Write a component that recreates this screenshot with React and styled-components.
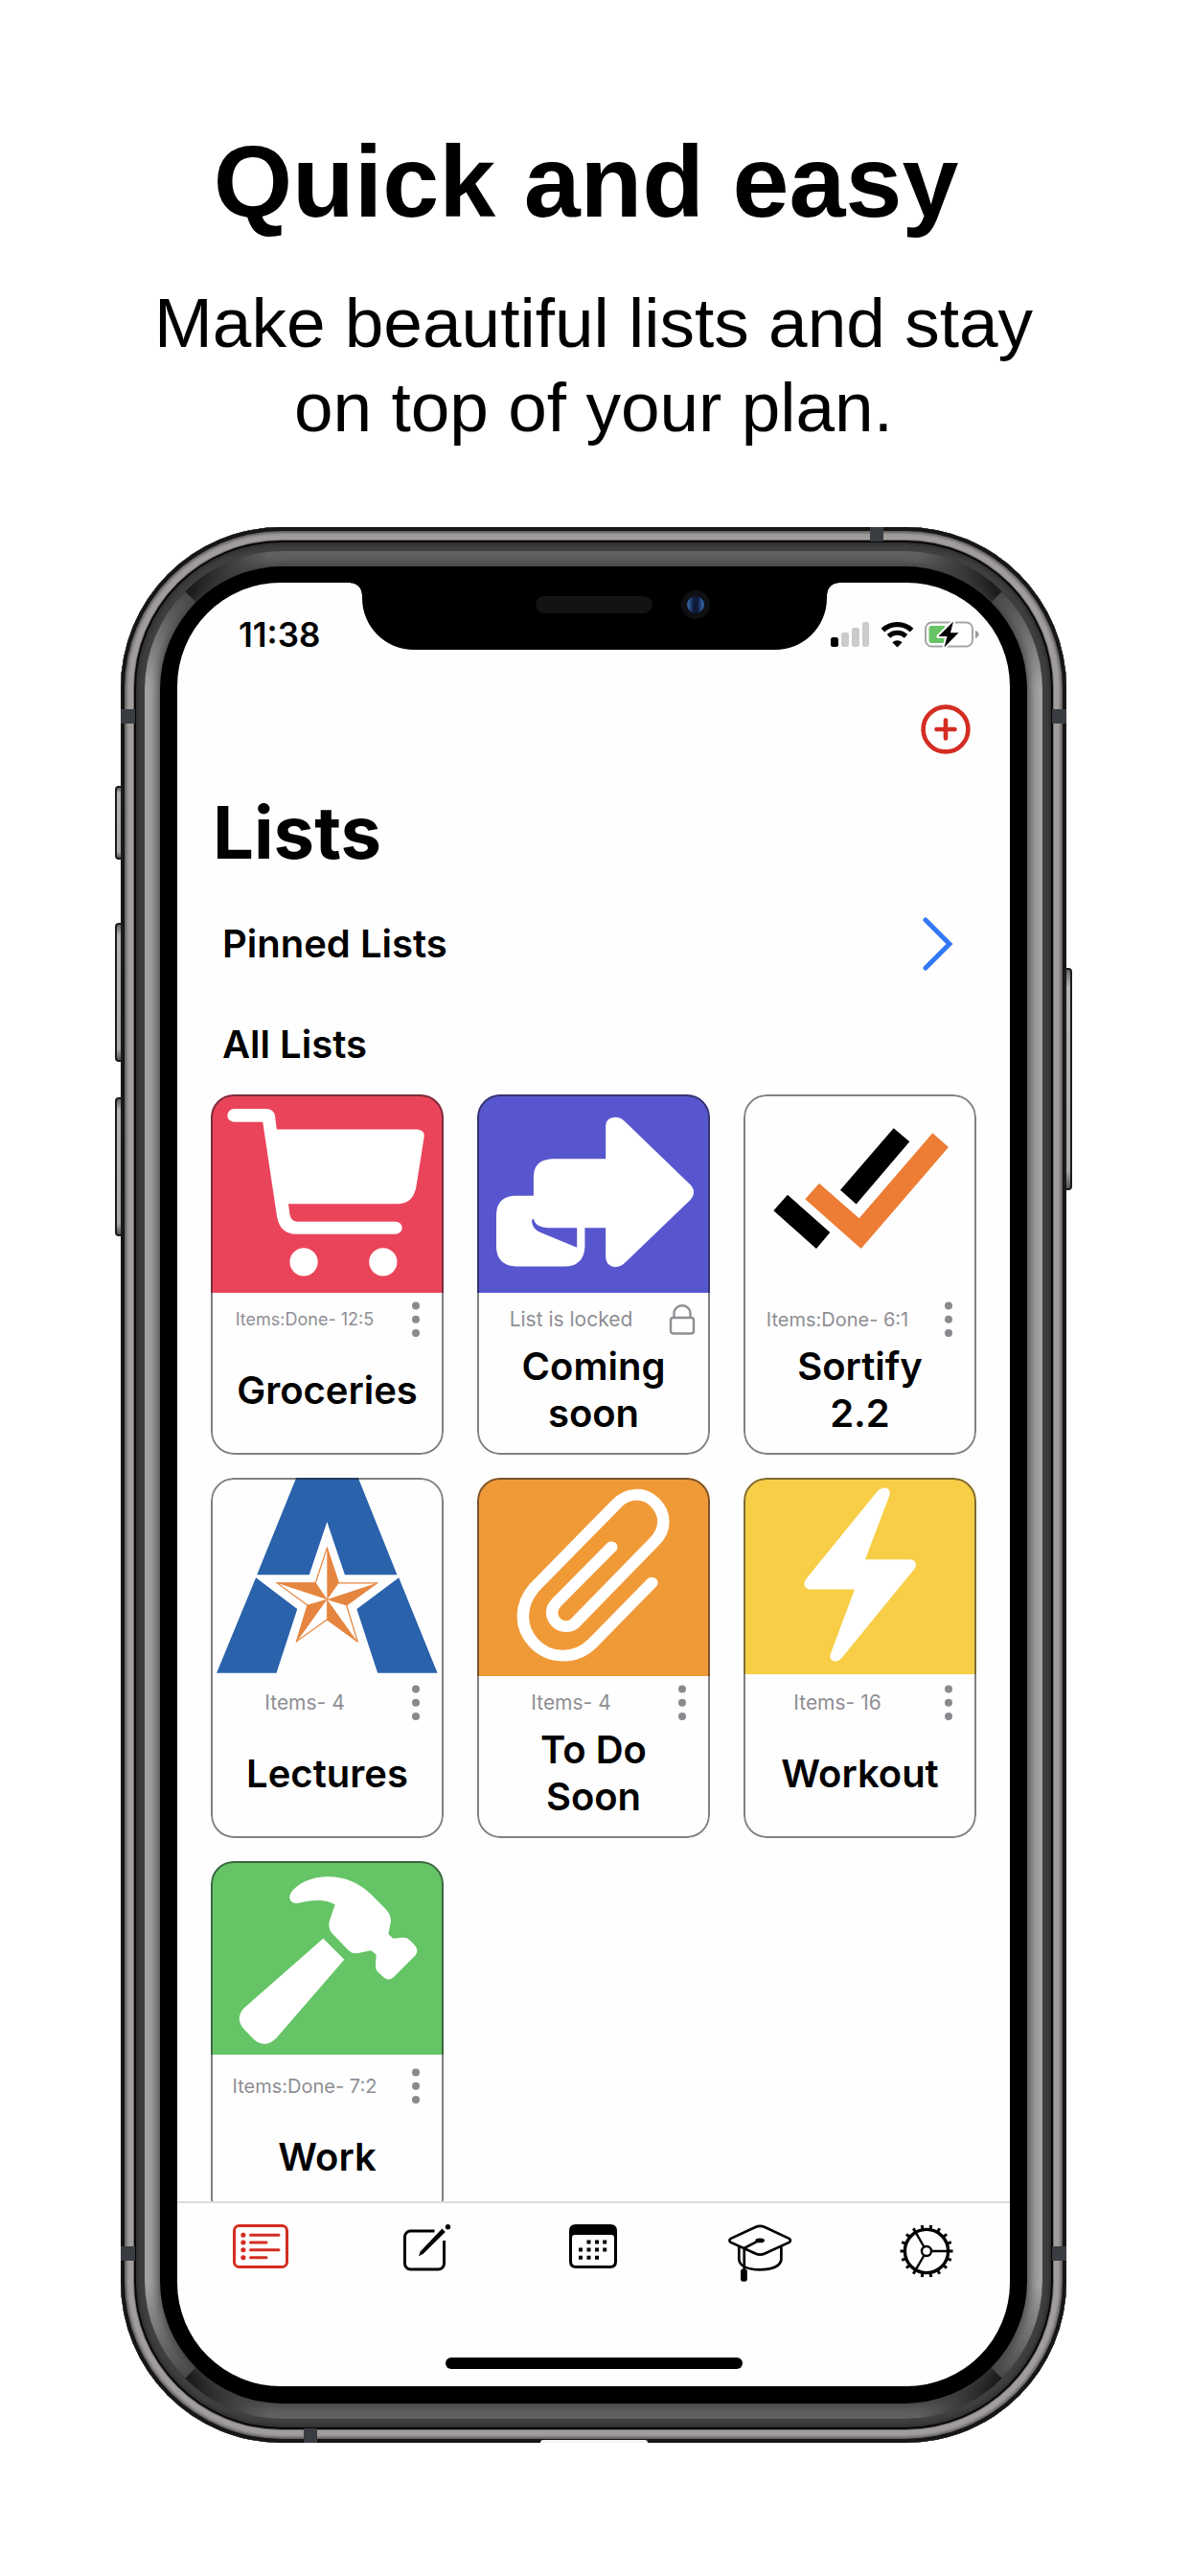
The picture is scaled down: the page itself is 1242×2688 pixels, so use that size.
import React from 'react';
import styled, { createGlobalStyle } from 'styled-components';

const GlobalStyle = createGlobalStyle`
  * { box-sizing: border-box; }
  body { margin: 0; background: #fff; color: #000; }
  h1, h2, h3, p, ul { margin: 0; padding: 0; }
  ul { list-style: none; }
  button { border: 0; background: none; padding: 0; margin: 0; color: inherit; font: inherit; cursor: pointer; }
  svg { display: block; }
`;

const Page = styled.main`
  display: flex;
  flex-direction: column;
  gap: 81px;
  padding: 125px 129px 139px 126px;
  background: #fff;
`;

const Hero = styled.header`
  display: flex;
  flex-direction: column;
  gap: 40px;
  text-align: center;
  font-family: 'Liberation Sans', Arial, sans-serif;
`;

const Headline = styled.h1`
  padding-right: 16px;
  font-size: 106px;
  line-height: 128px;
  font-weight: 700;
`;

const Tagline = styled.p`
  font-size: 73px;
  line-height: 88px;
`;

/* ---------- device ---------- */

const Phone = styled.div`
  position: relative;
  display: grid;
  grid-template-rows: minmax(0, 1fr);
  aspect-ratio: 987 / 1999;
  min-height: 0;
  padding: 25px;
  border-radius: 168px;
  background: #3f3f3f;
  box-shadow:
    inset 0 0 0 4px #161616,
    inset 0 0 3px 6px #5c5959,
    inset 0 0 0 13px #a19d9d,
    inset 0 0 0 14px #706d6d,
    inset 0 0 0 16px #060606,
    inset 0 0 4px 18px #2c2c2c;
`;

const Bezel = styled.div`
  position: relative;
  display: grid;
  grid-template-rows: minmax(0, 1fr);
  padding: 16px;
  border-radius: 144px;
  overflow: hidden;
  background: linear-gradient(90deg, #1c1c1c 50px, #626262 130px, #626262 calc(100% - 130px), #1c1c1c calc(100% - 50px));

  &::before {
    content: '';
    position: absolute;
    inset: 0;
    clip-path: polygon(0 0, 60px 60px, calc(100% - 60px) 60px, 100% 0, 100% 100%, calc(100% - 60px) calc(100% - 60px), 60px calc(100% - 60px), 0 100%);
    background: linear-gradient(180deg, #333 20px, #a4a4a4 140px, #a4a4a4 calc(100% - 140px), #333 calc(100% - 20px));
  }
`;

const Glass = styled.div`
  position: relative;
  display: grid;
  grid-template-rows: minmax(0, 1fr);
  padding: 17px 18px 18px;
  border-radius: 128px;
  background: #000;
  box-shadow: 0 0 12px 2px #3a3a3a;
`;

const Screen = styled.div`
  position: relative;
  display: flex;
  flex-direction: column;
  border-radius: 108px;
  overflow: hidden;
  background: #fefefe;
  font-family: Inter, 'Liberation Sans', sans-serif;
`;

const SideKey = styled.span`
  position: absolute;
  top: ${(p) => p.$top};
  ${(p) => p.$side}: -6px;
  width: 8px;
  height: ${(p) => p.$height};
  border: 2px solid #1c1c1c;
  border-radius: ${(p) => (p.$side === 'left' ? '4px 0 0 4px' : '0 4px 4px 0')};
  background: linear-gradient(180deg, #666, #b4b2b2 8%, #a8a6a6 92%, #555);
`;

const SideBand = styled.span`
  position: absolute;
  ${(p) => p.$side}: 0;
  ${(p) => p.$edge}: 190px;
  width: 15px;
  height: 15px;
  background: #393c41;
`;

const EndBand = styled.span`
  position: absolute;
  ${(p) => p.$side}: 191px;
  ${(p) => p.$edge}: 0;
  width: 14px;
  height: 15px;
  background: #393c41;
`;

const Port = styled.span`
  position: absolute;
  bottom: 0;
  left: 50%;
  width: 112px;
  margin-left: -56px;
  height: 3px;
  border-radius: 3px 3px 0 0;
  background: #f4f4f4;
`;

const Notch = styled.div`
  position: absolute;
  z-index: 1;
  top: 0;
  left: 50%;
  width: 485px;
  height: 70px;
  margin-left: -242px;
  border-radius: 0 0 54px 54px;
  background: #000;

  &::before, &::after {
    content: '';
    position: absolute;
    top: 0;
    width: 12px;
    height: 12px;
  }
  &::before { right: 100%; background: radial-gradient(circle at 0 100%, transparent 11px, #000 12px); }
  &::after { left: 100%; background: radial-gradient(circle at 100% 100%, transparent 11px, #000 12px); }
`;

const Speaker = styled.span`
  position: absolute;
  top: 14px;
  left: 181px;
  width: 122px;
  height: 18px;
  border-radius: 9px;
  background: #131313;
`;

const Camera = styled.span`
  position: absolute;
  top: 8px;
  left: 333px;
  width: 30px;
  height: 30px;
  border-radius: 50%;
  border: 6px solid #0e1013;
  background: linear-gradient(90deg, #2f5f9c 10%, #101a3a 38%, #101a3a 62%, #2f5f9c 90%);
`;

/* ---------- app ---------- */

const StatusBar = styled.div`
  flex: none;
  display: flex;
  justify-content: space-between;
  align-items: center;
  height: 108px;
  padding: 0 32px 0 64px;
`;

const Clock = styled.time`
  font-size: 35px;
  line-height: 40px;
  font-weight: 600;
`;

const StatusIcons = styled.div`
  display: flex;
  align-items: center;
  gap: 11px;
`;

const Toolbar = styled.div`
  flex: none;
  display: flex;
  justify-content: flex-end;
  align-items: center;
  height: 90px;
  padding-right: 41px;
`;

const Viewport = styled.div`
  flex: 1;
  min-height: 0;
  overflow: hidden;
`;

const Title = styled.h2`
  padding: 16px 37px 10px;
  font-size: 76px;
  line-height: 92px;
  font-weight: 700;
`;

const SectionRow = styled.div`
  display: flex;
  justify-content: space-between;
  align-items: center;
  height: ${(p) => p.$height};
  padding: 0 59px 0 47px;
`;

const SectionTitle = styled.h3`
  font-size: 40px;
  line-height: 48px;
  font-weight: 600;
`;

const Grid = styled.ul`
  display: grid;
  grid-template-columns: repeat(3, minmax(0, 1fr));
  gap: 24px 35px;
  padding: 8px 35px;
`;

const Card = styled.li`
  position: relative;
  height: 376px;
  border-radius: 24px;
  overflow: hidden;
  background: #fefefe;

  &::after {
    content: '';
    position: absolute;
    inset: 0;
    border: 2px solid rgba(28, 28, 38, 0.56);
    border-radius: 24px;
    pointer-events: none;
  }
`;

const CoverSlot = styled.div`
  height: 207px;
`;

const Cover = styled.div`
  height: ${(p) => p.$height};
  background: ${(p) => p.$color};

  & > svg { width: 100%; height: 100%; }
`;

const Meta = styled.div`
  display: grid;
  grid-template-columns: minmax(0, 1fr) 36px;
  align-items: center;
  height: 55px;
  padding-right: 11px;
  color: #8e8e93;
`;

const Count = styled.p`
  text-align: center;
  font-size: ${(p) => p.$size};
  line-height: 24px;
  white-space: nowrap;
`;

const CardButton = styled.button`
  display: grid;
  place-items: center;
`;

const CardTitle = styled.h3`
  display: flex;
  align-items: center;
  justify-content: center;
  height: 92px;
  padding: 0 26px;
  text-align: center;
  font-size: 40px;
  line-height: 49px;
  font-weight: 600;
`;

const TabBar = styled.nav`
  flex: none;
  display: grid;
  grid-template-columns: repeat(5, minmax(0, 1fr));
  height: 163px;
  border-top: 2px solid #dcdcdc;
`;

const Tab = styled.button`
  display: grid;
  place-items: start center;
  height: 100px;
  padding-top: 22px;
  color: ${(p) => (p.$active ? '#d42d22' : '#000')};
`;

const HomeIndicator = styled.div`
  flex: none;
  width: 310px;
  height: 12px;
  margin: 0 auto 18px;
  border-radius: 6px;
  background: #000;
`;

/* ---------- drawings ---------- */

const Signal = () => (
  <svg width="41" height="27" viewBox="0 0 41 27" aria-hidden="true">
    <rect x="0" y="16" width="8" height="10" rx="2.5" fill="#000" />
    <rect x="11" y="11" width="8" height="15" rx="2.5" fill="#cbcbcb" />
    <rect x="22" y="6" width="8" height="20" rx="2.5" fill="#cbcbcb" />
    <rect x="33" y="0" width="7" height="26" rx="2.5" fill="#cbcbcb" />
  </svg>
);

const Wifi = () => (
  <svg width="35" height="27" viewBox="0 0 35 27" aria-hidden="true">
    <path d="M2.4 8.6A22 22 0 0 1 32.6 8.6" fill="none" stroke="#000" strokeWidth="5.2" />
    <path d="M8.4 14.8A13.4 13.4 0 0 1 26.6 14.8" fill="none" stroke="#000" strokeWidth="5" />
    <path d="M17.5 26.5 12.3 21.2A7.6 7.6 0 0 1 22.7 21.2Z" fill="#000" />
  </svg>
);

const Battery = () => (
  <svg width="57" height="28" viewBox="0 0 57 28" aria-hidden="true">
    <rect x="1" y="1.5" width="49" height="25" rx="6.5" fill="#fff" stroke="#a6a6a6" strokeWidth="2" />
    <path d="M53 10q3.500 1.500 3.500 4t-3.500 4z" fill="#999" />
    <rect x="4.5" y="5" width="18" height="18" rx="3" fill="#66c466" />
    <path d="M30 0.500 14.500 16h9L20.500 27.500 35.500 12.300h-8.500Z" fill="#000" stroke="#fff" strokeWidth="4" paintOrder="stroke" strokeLinejoin="round" />
  </svg>
);

const PlusCircle = () => (
  <svg width="52" height="52" viewBox="0 0 52 52" fill="none" stroke="#d42d22" strokeWidth="4.6" strokeLinecap="round" aria-hidden="true">
    <circle cx="26" cy="26" r="23.4" />
    <path d="M26 16.500v19M16.500 26h19" />
  </svg>
);

const Chevron = () => (
  <svg width="32" height="56" viewBox="0 0 32 56" fill="none" stroke="#3478f6" strokeWidth="5" strokeLinecap="round" strokeLinejoin="miter" aria-hidden="true">
    <path d="M3 3 28 28 3 53" />
  </svg>
);

const Dots = () => (
  <svg width="10" height="38" viewBox="0 0 10 38" fill="#8a8a8e" aria-hidden="true">
    <circle cx="5" cy="4.5" r="4" />
    <circle cx="5" cy="18.8" r="4" />
    <circle cx="5" cy="33" r="4" />
  </svg>
);

const Lock = () => (
  <svg width="28" height="32" viewBox="0 0 28 32" fill="none" stroke="#8e8e93" strokeWidth="2.4" aria-hidden="true">
    <rect x="2" y="14" width="24" height="16.5" rx="2.5" />
    <path d="M5.500 14V9.500a8.500 8.200 0 0 1 17 0V14" />
  </svg>
);

const Cart = () => (
  <svg viewBox="55 63 681 618" preserveAspectRatio="none" fill="#fff" aria-hidden="true">
    <path d="M124 108H216Q240 108 243 132L248 172H660Q680 174 679 194L657 344Q649 404 604 404H282L286 436Q290 459 308 459H595A19.500 19.500 0 0 1 595 498H304Q256 498 248 440L207 149H124A20.500 20.500 0 0 1 124 108Z" />
    <ellipse cx="327" cy="585" rx="41" ry="43.5" />
    <ellipse cx="559" cy="585" rx="41" ry="43.5" />
  </svg>
);

const Share = () => (
  <svg viewBox="834 63 681 618" preserveAspectRatio="none" aria-hidden="true">
    <path fill="#fff" fillRule="evenodd" d="M1210 264V160Q1212 135 1238 134Q1253 134 1266 147L1457 344Q1478 367 1457 392L1266 588Q1253 601 1238 601Q1212 599 1210 572V479H1149V540Q1145 598 1090 599H948Q892 596 890 540V436Q892 380 948 379H999V318Q1001 266 1054 264ZM1126 479H1049Q1005 479 999 450Q990 452 997 472Q1004 487 1021 494L1126 540Z" />
  </svg>
);

const Checks = () => (
  <svg viewBox="108 63 729 618" preserveAspectRatio="none" aria-hidden="true">
    <path fill="#000" d="M246 376 379 493 336 544 202 425ZM578 168 628 210 461 405 411 361Z" />
    <path fill="#ed7d35" d="M345 340 470 449 700 183 750 227 476 544 301 389Z" />
  </svg>
);

const Letter = () => (
  <svg viewBox="55 63 681 618" preserveAspectRatio="none" aria-hidden="true">
    <path fill="#2a62ab" d="M305 63H486L600 365H447L395 200 343 365H190ZM187 374 308 472 247 671H72ZM605 374 482 472 543 671H718Z" />
    <path fill="#fff" stroke="#e5853f" strokeWidth="3.5" d="M395 282 429 391H541L452 460 484 573 395 505 306 573 338 460 249 391H361Z" />
    <path fill="#e5853f" d="M395 278 429 390 395 442ZM544 390 452 460 395 442ZM486 577 395 505V442ZM304 577 338 460 395 442ZM246 390H361L395 442Z" />
    <path fill="none" stroke="#e5853f" strokeWidth="2" d="M395 442 361 390M395 442 429 390M395 442 452 460M395 442V505M395 442 338 460" />
  </svg>
);

const Clip = () => (
  <svg viewBox="834 63 681 618" preserveAspectRatio="none" fill="none" stroke="#fff" strokeWidth="35" strokeLinecap="round" aria-hidden="true">
    <path d="M1345 390 1170 580C1118 634 1042 626 1000 578C956 528 958 458 1002 404L1240 146C1272 108 1322 106 1354 140C1388 176 1386 226 1354 260L1128 507C1110 532 1080 532 1064 512C1048 494 1050 468 1066 452L1227 279" />
  </svg>
);

const Bolt = () => (
  <svg viewBox="108 63 729 613" preserveAspectRatio="none" fill="#fff" aria-hidden="true">
    <path d="M530 102Q546 90 559 97Q569 104 565 118L489 318H630Q648 320 648 336Q647 343 641 350L415 626Q404 638 391 636Q376 631 380 614L456 411H316Q298 409 298 393Q299 385 306 376Z" />
  </svg>
);

const Hammer = () => (
  <svg viewBox="60 60 729 605" preserveAspectRatio="none" fill="#fff" aria-hidden="true">
    <path d="M412 302 478 368 265 613Q232 646 197 619L159 580Q138 551 162 521Z" />
    <path d="M332 192Q314 194 308 180Q304 164 318 150Q356 112 420 109Q500 106 562 164L606 208Q624 226 624 248L616 288 631 302 664 299Q675 299 684 308L701 326Q711 340 701 354L632 423Q617 437 602 424L582 405Q575 398 576 388L578 353 562 339 518 348Q503 350 492 340L438 284Q426 268 432 246L449 196Q408 172 332 192Z" />
  </svg>
);

const ListIcon = () => (
  <svg width="58" height="46" viewBox="0 0 58 46" fill="none" stroke="currentColor" strokeWidth="3" strokeLinecap="round" aria-hidden="true">
    <rect x="1.5" y="1.5" width="55" height="43" rx="5" />
    <path d="M18.500 11.200H48M18.500 19H35M18.500 26.800H48M18.500 34.800H35" />
    <path d="M10.800 11.200h.2M10.800 19h.2M10.800 26.800h.2M10.800 34.800h.2" strokeWidth="5" />
  </svg>
);

const ComposeIcon = () => (
  <svg width="50" height="52" viewBox="0 0 50 52" fill="none" stroke="currentColor" strokeWidth="3" aria-hidden="true">
    <path d="M32.500 7H7.500a6 6 0 0 0-6 6V41a6 6 0 0 0 6 6H36.500a6 6 0 0 0 6-6V17" />
    <path fill="currentColor" stroke="none" d="M40.400 4.500 43.800 8 20.500 31 16 33.200 17.600 28.500Z" />
    <circle cx="46.5" cy="2.8" r="2.7" fill="currentColor" stroke="none" />
  </svg>
);

const CalendarIcon = () => (
  <svg width="50" height="46" viewBox="0 0 50 46" fill="currentColor" aria-hidden="true">
    <path fillRule="evenodd" d="M7 0H43Q50 0 50 7V39Q50 46 43 46H7Q0 46 0 39V7Q0 0 7 0ZM6 11Q3 11 3 14V39Q3 43 7 43H43Q47 43 47 39V14Q47 11 44 11Z" />
    <path d="M18.500 16.500h4v4h-4zM27 16.500h4v4h-4zM35.200 16.500h4v4h-4zM10 24.600h4v4h-4zM18.500 24.600h4v4h-4zM27 24.600h4v4h-4zM35.200 24.600h4v4h-4zM10 32.800h4v4h-4zM18.500 32.800h4v4h-4zM27 32.800h4v4h-4z" />
  </svg>
);

const CapIcon = () => (
  <svg width="68" height="60" viewBox="459 120 199 181" preserveAspectRatio="none" fill="none" stroke="currentColor" strokeWidth="8" strokeLinejoin="round" aria-hidden="true">
    <path d="M545 129Q559 122 574 129L648 165Q656 171 648 177L574 212Q559 219 545 212L470 177Q462 171 470 165Z" />
    <path d="M495 190V232Q500 262 559 263Q618 262 624 232V190" />
    <path d="M556 171 511 195V264" />
    <ellipse cx="559" cy="171" rx="14" ry="7" fill="currentColor" stroke="none" />
    <rect x="500" y="260" width="20" height="40" rx="8" fill="currentColor" stroke="none" />
  </svg>
);

const GearIcon = () => (
  <svg width="56" height="56" viewBox="-28 -28 56 56" fill="none" stroke="currentColor" aria-hidden="true">
    <circle r="22.6" strokeWidth="3.4" />
    <circle r="5" strokeWidth="2.4" />
    {Array.from({ length: 18 }, (_, i) => (
      <path key={i} d="M23 0H27.500" strokeWidth="3" transform={`rotate(${i * 20})`} />
    ))}
    {[0, 120, 240].map((a) => (
      <path key={a} d="M5.500 0H23" strokeWidth="2.4" transform={`rotate(${a})`} />
    ))}
  </svg>
);

const lists = [
  { name: 'Groceries', info: 'Items:Done- 12:5', infoSize: '18px', color: '#ea445a', height: '207px', Art: Cart },
  { name: 'Coming soon', info: 'List is locked', infoSize: '21px', color: '#5856ce', height: '207px', Art: Share, locked: true },
  { name: 'Sortify 2.2', info: 'Items:Done- 6:1', infoSize: '20px', color: '#fefefe', height: '207px', Art: Checks },
  { name: 'Lectures', info: 'Items- 4', infoSize: '21px', color: '#fefefe', height: '207px', Art: Letter },
  { name: 'To Do Soon', info: 'Items- 4', infoSize: '21px', color: '#f09a37', height: '207px', Art: Clip },
  { name: 'Workout', info: 'Items- 16', infoSize: '21px', color: '#f7ce46', height: '205px', Art: Bolt },
  { name: 'Work', info: 'Items:Done- 7:2', infoSize: '20px', color: '#65c466', height: '202px', Art: Hammer },
];

const tabs = [
  { label: 'Lists', Icon: ListIcon },
  { label: 'Compose', Icon: ComposeIcon },
  { label: 'Calendar', Icon: CalendarIcon },
  { label: 'School', Icon: CapIcon },
  { label: 'Settings', Icon: GearIcon },
];

export default function App() {
  return (
    <>
      <GlobalStyle />
      <Page>
        <Hero>
          <Headline>Quick and easy</Headline>
          <Tagline>Make beautiful lists and stay<br />on top of your plan.</Tagline>
        </Hero>
        <Phone>
          <SideKey $side="left" $top="270px" $height="77px" />
          <SideKey $side="left" $top="413px" $height="145px" />
          <SideKey $side="left" $top="595px" $height="145px" />
          <SideKey $side="right" $top="460px" $height="232px" />
          <SideBand $side="left" $edge="top" />
          <SideBand $side="right" $edge="top" />
          <SideBand $side="left" $edge="bottom" />
          <SideBand $side="right" $edge="bottom" />
          <EndBand $side="right" $edge="top" />
          <EndBand $side="left" $edge="bottom" />
          <Port />
          <Bezel>
            <Glass>
              <Screen>
                <Notch>
                  <Speaker />
                  <Camera />
                </Notch>
                <StatusBar>
                  <Clock>11:38</Clock>
                  <StatusIcons>
                    <Signal />
                    <Wifi />
                    <Battery />
                  </StatusIcons>
                </StatusBar>
                <Toolbar>
                  <button type="button" aria-label="Add list"><PlusCircle /></button>
                </Toolbar>
                <Viewport>
                  <Title>Lists</Title>
                  <SectionRow $height="122px">
                    <SectionTitle>Pinned Lists</SectionTitle>
                    <button type="button" aria-label="Show pinned lists"><Chevron /></button>
                  </SectionRow>
                  <SectionRow $height="88px">
                    <SectionTitle>All Lists</SectionTitle>
                  </SectionRow>
                  <Grid>
                    {lists.map(({ name, info, infoSize, color, height, Art, locked }) => (
                      <Card key={name}>
                        <CoverSlot>
                          <Cover $color={color} $height={height}><Art /></Cover>
                        </CoverSlot>
                        <Meta>
                          <Count $size={infoSize}>{info}</Count>
                          <CardButton type="button" aria-label={`${name} options`}>
                            {locked ? <Lock /> : <Dots />}
                          </CardButton>
                        </Meta>
                        <CardTitle>{name}</CardTitle>
                      </Card>
                    ))}
                  </Grid>
                </Viewport>
                <TabBar>
                  {tabs.map(({ label, Icon }, i) => (
                    <Tab key={label} type="button" aria-label={label} $active={i === 0}><Icon /></Tab>
                  ))}
                </TabBar>
                <HomeIndicator />
              </Screen>
            </Glass>
          </Bezel>
        </Phone>
      </Page>
    </>
  );
}
